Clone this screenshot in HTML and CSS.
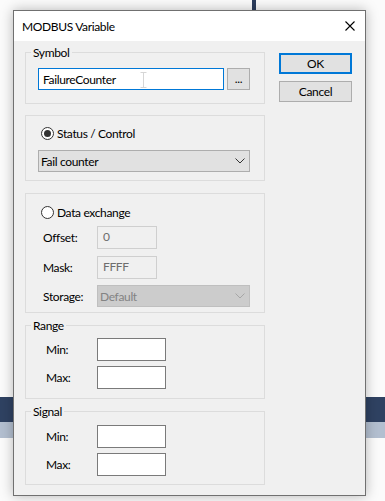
FILE: index.html
```html
<!DOCTYPE html>
<html lang="en">
<head>
    <meta charset="UTF-8">
    <meta name="viewport" content="width=device-width, initial-scale=1.0">
    <title>MODBUS Variable</title>
    <link rel="stylesheet" href="styles.css">
</head>
<body>
    <div class="stem"></div>
    <div class="band band-dark"></div>
    <div class="band band-light"></div>

    <div class="dialog">
        <div class="titlebar">
            <span class="title">MODBUS Variable</span>
            <svg class="close" width="10" height="10" viewBox="0 0 10 10">
                <path d="M0.5 0.5 L9.5 9.5 M9.5 0.5 L0.5 9.5" stroke="#000" stroke-width="1.1" fill="none"/>
            </svg>
        </div>

        <div class="dialog-body">
            <div class="groups">
                <div class="group group-symbol">
                    <span class="caption">Symbol</span>
                    <div class="symbol-row">
                        <div class="textbox focused">
                            FailureCounter
                            <svg class="ibeam" width="7" height="16" viewBox="0 0 7 16">
                                <path d="M0.5 0.5 H6.5 M3.5 0.5 V15.5 M0.5 15.5 H6.5" stroke="#d6d6d6" stroke-width="1" fill="none"/>
                            </svg>
                        </div>
                        <div class="browse">...</div>
                    </div>
                </div>

                <div class="group group-status">
                    <div class="radio-row">
                        <span class="radio checked"></span>
                        <span>Status / Control</span>
                    </div>
                    <div class="combo combo-wide">
                        <span>Fail counter</span>
                        <svg width="10" height="6" viewBox="0 0 10 6">
                            <path d="M0.5 0.5 L5 5 L9.5 0.5" stroke="#333" stroke-width="1" fill="none"/>
                        </svg>
                    </div>
                </div>

                <div class="group group-data">
                    <div class="radio-row">
                        <span class="radio"></span>
                        <span>Data exchange</span>
                    </div>
                    <div class="field field-offset">
                        <label>Offset:</label>
                        <div class="textbox disabled">0</div>
                    </div>
                    <div class="field field-mask">
                        <label>Mask:</label>
                        <div class="textbox disabled">FFFF</div>
                    </div>
                    <div class="field field-storage">
                        <label>Storage:</label>
                        <div class="combo combo-disabled">
                            <span>Default</span>
                            <svg width="10" height="6" viewBox="0 0 10 6">
                                <path d="M0.5 0.5 L5 5 L9.5 0.5" stroke="#a6a6a6" stroke-width="1" fill="none"/>
                            </svg>
                        </div>
                    </div>
                </div>

                <div class="group group-range">
                    <span class="caption">Range</span>
                    <div class="field limit">
                        <label>Min:</label>
                        <div class="textbox plain"></div>
                    </div>
                    <div class="field limit limit-max">
                        <label>Max:</label>
                        <div class="textbox plain"></div>
                    </div>
                </div>

                <div class="group group-signal">
                    <span class="caption">Signal</span>
                    <div class="field limit">
                        <label>Min:</label>
                        <div class="textbox plain"></div>
                    </div>
                    <div class="field limit limit-max">
                        <label>Max:</label>
                        <div class="textbox plain"></div>
                    </div>
                </div>
            </div>

            <div class="actions">
                <div class="btn btn-default">OK</div>
                <div class="btn">Cancel</div>
            </div>
        </div>
    </div>
</body>
</html>
```

FILE: styles.css
```css
* {
    box-sizing: border-box;
}

body {
    margin: 0;
    height: 501px;
    overflow: hidden;
    position: relative;
    background-color: #fbfbfb;
    font-family: Lato, "Noto Sans", sans-serif;
    font-size: 12px;
    letter-spacing: -0.35px;
    color: #000;
}

.stem {
    position: absolute;
    left: 252px;
    top: 0;
    width: 4px;
    height: 10px;
    background: #2c3d5d;
}

.band {
    position: absolute;
    left: 0;
    right: 0;
}

.band-dark {
    top: 397px;
    height: 25px;
    background: #2f4262;
}

.band-light {
    top: 422px;
    height: 16px;
    background: #b3bfd0;
}

.dialog {
    position: relative;
    z-index: 1;
    margin: 10px 0 0 13px;
    width: 353px;
    height: 486px;
    border: 1px solid #707070;
    background: #f0f0f0;
    box-shadow: 0 0 12px rgba(0, 0, 0, 0.28);
}

.titlebar {
    height: 30px;
    background: #fff;
    display: flex;
    align-items: center;
    padding: 0 10px 0 8px;
}

.title {
    flex: 1;
}

.dialog-body {
    display: flex;
    gap: 14px;
    padding: 11px 0 0 11px;
}

.groups {
    width: 240px;
    display: flex;
    flex-direction: column;
}

.group {
    position: relative;
    border: 1px solid #dcdcdc;
    padding-left: 12px;
    margin-top: 12px;
}

.group-symbol {
    margin-top: 0;
    padding-top: 15px;
    padding-bottom: 13px;
}

.group-status {
    margin-top: 11px;
    padding-top: 10px;
    padding-bottom: 8px;
}

.group-data {
    padding-top: 11px;
    padding-bottom: 5px;
}

.group-range {
    padding-top: 12px;
    padding-bottom: 9px;
}

.group-signal {
    padding-top: 13px;
    padding-bottom: 8px;
}

.caption {
    position: absolute;
    left: 5px;
    top: -8px;
    padding: 0 2px;
    line-height: 15px;
    background: #f0f0f0;
}

.symbol-row {
    display: flex;
    gap: 3px;
}

.textbox {
    position: relative;
    height: 23px;
    background: #fff;
    border: 1px solid #7a7a7a;
    padding: 0 4px;
    display: flex;
    align-items: center;
}

.textbox.focused {
    width: 186px;
    height: 22px;
    border-color: #0078d7;
}

.ibeam {
    position: absolute;
    left: 101px;
    top: 3px;
}

.browse {
    width: 23px;
    height: 22px;
    border: 1px solid #adadad;
    background: #e1e1e1;
    text-align: center;
    line-height: 20px;
}

.textbox.disabled {
    width: 60px;
    background: #f0f0f0;
    border-color: #cfcfcf;
    color: #6d6d6d;
    align-items: flex-start;
    padding: 2px 5px 0;
}

.textbox.plain {
    width: 69px;
}

.radio-row {
    height: 15px;
    display: flex;
    align-items: center;
    gap: 3px;
    margin-left: 3px;
}

.radio {
    width: 13px;
    height: 13px;
    border-radius: 50%;
    border: 1px solid #333;
    background: #fff;
    display: flex;
    align-items: center;
    justify-content: center;
}

.radio.checked::after {
    content: "";
    width: 7px;
    height: 7px;
    border-radius: 50%;
    background: #333;
}

.combo {
    height: 22px;
    border: 1px solid #adadad;
    background: #e1e1e1;
    display: flex;
    align-items: center;
    justify-content: space-between;
    padding: 0 4px 0 2px;
}

.combo-wide {
    width: 212px;
    margin-top: 9px;
}

.combo-disabled {
    width: 153px;
    background: #cccccc;
    border-color: #bfbfbf;
    color: #838383;
}

.field {
    display: flex;
    align-items: center;
}

.field label {
    width: 59px;
    padding-left: 5px;
}

.field-offset {
    margin-top: 6px;
}

.field-mask {
    margin-top: 7px;
}

.field-storage {
    margin-top: 6px;
}

.limit label {
    padding-left: 8px;
}

.limit-max {
    margin-top: 5px;
}

.actions {
    width: 73px;
    margin-top: 1px;
    display: flex;
    flex-direction: column;
    gap: 7px;
}

.btn {
    height: 21px;
    border: 1px solid #adadad;
    background: #e1e1e1;
    text-align: center;
    line-height: 19px;
}

.btn-default {
    border: 2px solid #0078d7;
    line-height: 17px;
}
```
